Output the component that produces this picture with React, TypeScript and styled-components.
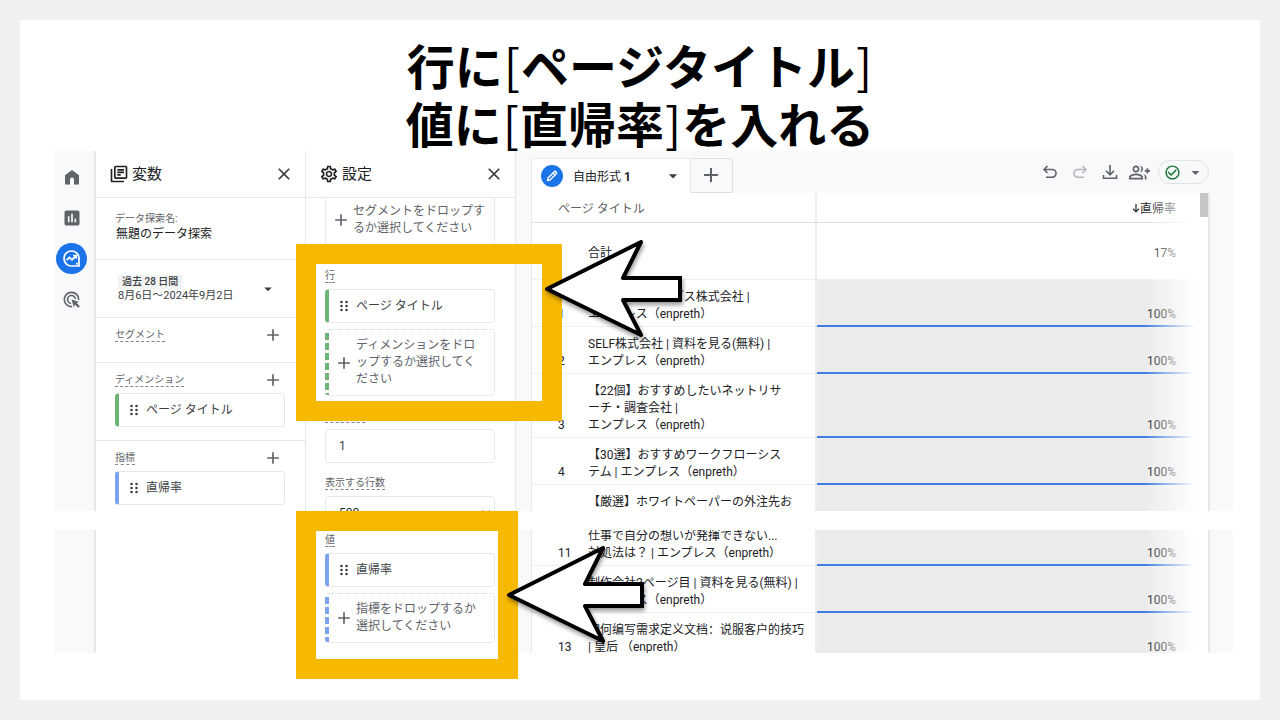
import React from "react";
import styled, { createGlobalStyle, css } from "styled-components";
import {
  MdAdd,
  MdAdsClick,
  MdArrowDropDown,
  MdCheckCircleOutline,
  MdClose,
  MdInsertChart,
  MdOutlineGroupAdd,
  MdOutlineLibraryBooks,
  MdOutlineSettings,
} from "react-icons/md";

const GREEN = "#6db577";
const BLUE = "#7ba4ee";
const LINE = "#e6e8eb";

const GlobalStyle = createGlobalStyle`
  *, *::before, *::after { box-sizing: border-box; }
  body {
    margin: 0;
    background: #f0f0f0;
    color: #202124;
    font-family: Roboto, "Noto Sans CJK JP", sans-serif;
    font-size: 12px;
    line-height: 17px;
  }
  button, input, select { font: inherit; color: inherit; }
`;

const Page = styled.div`
  min-height: 100vh;
  padding: 20px;
  display: flex;
`;

const Slide = styled.main`
  flex: 1;
  min-width: 0;
  background: #fff;
  padding: 15px 27px 20px 34px;
`;

const Title = styled.h1`
  margin: 0 7px 0 0;
  text-align: center;
  color: #000;
  font: 700 48px/58px "Noto Sans CJK JP", sans-serif;
`;

const Bracket = styled.span`
  margin: 0 1px;
  font-weight: 400;
`;

const Stage = styled.div`
  position: relative;
  display: flex;
  flex-direction: column;
  gap: 19px;
`;

const Capture = styled.section<{ $height: number }>`
  display: flex;
  height: ${(p) => p.$height}px;
  overflow: hidden;
  background: #f8f9fb;
`;

const Rail = styled.nav`
  flex: none;
  width: 42px;
  padding-top: 5px;
  border-right: 2px solid ${LINE};
  padding-right: 5px;
  display: flex;
  flex-direction: column;
  align-items: center;
`;

const RailButton = styled.button<{ $active?: boolean }>`
  width: 31px;
  height: 31px;
  margin: 5px 0;
  padding: 0;
  border: 0;
  border-radius: 50%;
  display: grid;
  place-items: center;
  background: ${(p) => (p.$active ? "#1a73e8" : "transparent")};
  color: ${(p) => (p.$active ? "#fff" : "#5f6368")};
`;

const Panel = styled.section`
  flex: none;
  width: 210px;
  background: #fff;
  border-right: 1px solid ${LINE};
  display: flex;
  flex-direction: column;
  overflow: hidden;
`;

const PanelHeader = styled.header`
  flex: none;
  height: 47px;
  padding: 0 11px 1px 13px;
  border-bottom: 1px solid ${LINE};
  display: flex;
  align-items: center;
  gap: 3px;
  background: #fff;
  position: relative;
`;

const PanelTitle = styled.h2`
  margin: 0;
  flex: 1;
  font-size: 15px;
  font-weight: 400;
  line-height: 20px;
`;

const IconButton = styled.button`
  flex: none;
  padding: 0;
  border: 0;
  background: none;
  display: grid;
  place-items: center;
  color: #3c4043;
`;

const Block = styled.div<{ $height?: number }>`
  flex: none;
  ${(p) => p.$height && css`height: ${p.$height}px;`}
  padding: 9px 19px 0;
  border-bottom: 1px solid ${LINE};
  &:last-child { border-bottom: 0; }
`;

const Small = styled.div`
  margin-top: 4px;
  font-size: 10px;
  line-height: 15px;
  color: #5f6368;
`;

const Name = styled.div`
  padding-left: 1px;
  line-height: 16px;
`;

const DateBlock = styled(Block)`
  display: flex;
  align-items: center;
  justify-content: space-between;
  padding: 0 28px 0 22px;
`;

const DateText = styled.div`
  font-size: 11px;
  line-height: 14px;
  color: #3c4043;
`;

const Period = styled.span`
  display: block;
  width: max-content;
  padding: 0 4px;
  background: #f1f3f4;
  font-size: 10px;
  font-weight: 500;
`;

const LabelRow = styled.div`
  display: flex;
  justify-content: space-between;
  align-items: center;
  height: 15px;
  margin-bottom: 6px;
  & > button { margin-right: 3px; }
`;

const Label = styled.label`
  display: block;
  width: max-content;
  height: 15px;
  font-size: 10px;
  line-height: 16px;
  color: #5f6368;
  border-bottom: 1px dashed #80868b;
`;

const Chip = styled.button<{ $tone: string }>`
  display: flex;
  align-items: center;
  gap: 8px;
  width: 170px;
  height: 34px;
  padding: 0 11px;
  border: 1px solid ${LINE};
  border-left: 4px solid ${(p) => p.$tone};
  border-radius: 4px;
  background: #fff;
  color: #3c4043;
`;

const Drop = styled.button<{ $tone?: string }>`
  display: flex;
  align-items: center;
  gap: 2px;
  width: 170px;
  padding: 7px 0 7px ${(p) => (p.$tone ? 9 : 5)}px;
  border: 1px dotted #d4d7db;
  border-radius: 4px;
  text-align: left;
  white-space: nowrap;
  color: #5f6368;
  background: #fff;
  ${(p) =>
    p.$tone &&
    css`
      border-left: 0;
      background: repeating-linear-gradient(
          to bottom,
          transparent 0 3px,
          ${p.$tone} 3px 10px
        )
        left top / 4px 100% no-repeat;
    `}
  & > svg { flex: none; }
`;

const Settings = styled.div<{ $top: number }>`
  padding: 0 20px 0 19px;
  margin-top: ${(p) => p.$top}px;
  display: flex;
  flex-direction: column;
  gap: 6px;
`;

const Group = styled.div<{ $gap?: number }>`
  display: flex;
  flex-direction: column;
  gap: 6px;
  margin-top: ${(p) => p.$gap ?? 0}px;
`;

const field = css`
  width: 170px;
  height: 34px;
  padding: 0 13px;
  border: 1px solid ${LINE};
  border-radius: 4px;
  background: #fff;
  color: #3c4043;
`;

const TextInput = styled.input`
  ${field}
`;

const Select = styled.select`
  ${field}
  padding: 0 9px;
  color: #202124;
`;

const Main = styled.section`
  flex: 1;
  min-width: 0;
  margin-left: 15px;
`;

const TopBar = styled.div`
  display: flex;
  align-items: flex-end;
  height: 42px;
  padding-right: 24px;
`;

const Tab = styled.button`
  display: flex;
  align-items: center;
  width: 160px;
  height: 35px;
  padding: 0 7px 0 9px;
  border: 1px solid ${LINE};
  border-bottom: 0;
  border-radius: 4px 4px 0 0;
  background: #fff;
  & > span:nth-child(2) { flex: 1; text-align: left; padding: 2px 0 0 10px; }
`;

const Pencil = styled.span`
  display: grid;
  place-items: center;
  width: 22px;
  height: 22px;
  border-radius: 50%;
  background: #1a73e8;
`;

const AddTab = styled.button`
  width: 42px;
  height: 35px;
  padding: 0 1px 2px 0;
  border: 1px solid #dcdfe3;
  border-left: 0;
  border-radius: 0 4px 0 0;
  background: #f8f9fb;
  color: #5f6368;
  display: grid;
  place-items: center;
`;

const Tools = styled.div`
  flex: 1;
  height: 42px;
  display: flex;
  justify-content: flex-end;
  align-items: center;
  gap: 9px;
  & > button { width: 21px; color: #5f6368; }
`;

const Status = styled.button`
  && {
    width: 51px;
    height: 24px;
    padding: 0 3px 0 5px;
    margin-left: -1px;
    border: 1px solid #dfe2e6;
    border-radius: 12px;
    background: #f8f9fb;
    display: flex;
    align-items: center;
    justify-content: space-between;
  }
`;

const Card = styled.div`
  position: relative;
  margin-right: 23px;
  background: #fff;
  border: solid ${LINE};
  border-width: 0 2px 0 1px;
  min-height: 100%;
`;

const Fade = styled.div`
  position: absolute;
  top: 0;
  right: 0;
  bottom: 0;
  width: 64px;
  background: linear-gradient(to right, rgba(255, 255, 255, 0), #fff 80%);
`;

const ScrollThumb = styled.div`
  position: absolute;
  top: 0;
  right: 0;
  width: 8px;
  height: 24px;
  background: #c6c6c6;
`;

const Table = styled.table<{ $shift?: number }>`
  width: 100%;
  table-layout: fixed;
  border-collapse: separate;
  border-spacing: 0;
  margin-top: ${(p) => -(p.$shift ?? 0)}px;
  td, th { border-bottom: 1px solid #eef0f2; font-weight: 400; text-align: left; }
`;

const NumberCell = styled.td`
  padding: 9px 0 3px 26px;
  vertical-align: bottom;
`;

const NameCell = styled.td`
  padding: 9px 0 3px;
  vertical-align: top;
  white-space: nowrap;
  && { border-right: 2px solid #eceef0; }
`;

const BarCell = styled.td`
  padding: 9px 32px 2px 0;
  vertical-align: bottom;
  background: #ebebeb;
  && { text-align: right; border-bottom: 2px solid #3f7de0; }
`;

const HeadName = styled.th`
  height: 30px;
  padding: 4px 0 0 26px;
  color: #5f6368;
  && { border-right: 2px solid #eceef0; border-bottom-color: #dfe1e5; }
`;

const HeadValue = styled.th`
  padding: 4px 32px 0 0;
  && { text-align: right; border-bottom-color: #dfe1e5; }
`;

const TotalCell = styled.td<{ $value?: boolean }>`
  height: 57px;
  padding: 4px ${(p) => (p.$value ? 32 : 0)}px 0 0;
  && { ${(p) => (p.$value ? "text-align: right;" : "border-right: 2px solid #eceef0;")} }
`;

const Chinese = styled.span`
  font-family: Roboto, "Noto Sans CJK SC", sans-serif;
`;

const Frame = styled.div<{ $x: number; $y: number; $w: number; $h: number }>`
  position: absolute;
  left: ${(p) => p.$x}px;
  top: ${(p) => p.$y}px;
  width: ${(p) => p.$w}px;
  height: ${(p) => p.$h}px;
  border: 20px solid #f6b900;
  pointer-events: none;
`;

const ArrowSvg = styled.svg<{ $x: number; $y: number }>`
  position: absolute;
  left: ${(p) => p.$x}px;
  top: ${(p) => p.$y}px;
  filter: drop-shadow(1px 3px 2px rgba(0, 0, 0, 0.4));
  pointer-events: none;
`;

const Arrow = ({ x, y }: { x: number; y: number }) => (
  <ArrowSvg $x={x} $y={y} width="144" height="104" viewBox="0 0 144 104" aria-hidden="true">
    <path
      d="M4 52 98 5 80 41H137V63H80L98 98Z"
      fill="#fff"
      stroke="#000"
      strokeWidth="4"
      strokeLinejoin="round"
    />
    <path d="M82 41H137V63H82" fill="none" stroke="#000" strokeWidth="4" />
  </ArrowSvg>
);

const HomeIcon = () => (
  <svg width="16" height="16" viewBox="0 0 16 16" aria-hidden="true">
    <path d="M1 6.2 8 1l7 5.2V15.500H10V10.500a2 2 0 0 0-4 0V15.500H1Z" fill="currentColor" />
  </svg>
);

const ExploreIcon = () => (
  <svg width="19" height="19" viewBox="0 0 19 19" fill="none" stroke="currentColor" aria-hidden="true">
    <path d="M17 9.500V17H9.500A7.500 7.500 0 1 1 17 9.500Z" strokeWidth="1.700" />
    <path d="M4.500 11.200 7.500 8.500 10 10.800 13.800 7" strokeWidth="1.800" />
    <path d="M11 6.500h3.200v3.200" strokeWidth="1.500" />
    <circle cx="14.800" cy="14.800" r="1" fill="#fff" stroke="none" />
  </svg>
);

const DragIcon = () => (
  <svg width="8" height="12" viewBox="0 0 8 12" fill="#3c4043" aria-hidden="true">
    {[2, 6, 10].map((y) => (
      <React.Fragment key={y}>
        <circle cx="1.500" cy={y} r="1.300" />
        <circle cx="6.500" cy={y} r="1.300" />
      </React.Fragment>
    ))}
  </svg>
);

const PencilIcon = () => (
  <svg width="12" height="12" viewBox="0 0 12 12" fill="none" stroke="#fff" aria-hidden="true">
    <path d="M1.500 10.500 2 8 8.300 1.700a1 1 0 0 1 1.400 0l.6.6a1 1 0 0 1 0 1.400L4 10Z" strokeWidth="1.400" strokeLinejoin="round" />
    <path d="M7 3 9 5" strokeWidth="1.300" />
  </svg>
);

const UndoIcon = ({ flip }: { flip?: boolean }) => (
  <svg width="16" height="16" viewBox="0 0 16 16" fill="none" stroke={flip ? "#b4b7ba" : "#5f6368"} strokeWidth="1.600" aria-hidden="true">
    <g transform={flip ? "matrix(-1 0 0 1 16 0)" : undefined}>
      <path d="M5.500 2 2 5.500 5.500 9M2 5.500H10.200a3.800 3.800 0 0 1 0 7.700H4" />
    </g>
  </svg>
);

const DownloadIcon = () => (
  <svg width="16" height="16" viewBox="0 0 16 16" fill="none" stroke="currentColor" strokeWidth="1.600" aria-hidden="true">
    <path d="M8 1v9.500M4 6.800l4 4 4-4M1.500 11v3.200h13V11" />
  </svg>
);

const SortIcon = () => (
  <svg width="8" height="9" viewBox="0 0 8 9" fill="none" stroke="#3c4043" strokeWidth="1.400" aria-hidden="true">
    <path d="M4 0v8M1 4.800l3 3 3-3" />
  </svg>
);

type Row = { no: number; name: React.ReactNode };

const upperRows: Row[] = [
  { no: 1, name: <>サイバーウェイブス株式会社 |<br />エンプレス（enpreth）</> },
  { no: 2, name: <>SELF株式会社 | 資料を見る(無料) |<br />エンプレス（enpreth）</> },
  { no: 3, name: <>【22個】おすすめしたいネットリサ<br />ーチ・調査会社 |<br />エンプレス（enpreth）</> },
  { no: 4, name: <>【30選】おすすめワークフローシス<br />テム | エンプレス（enpreth）</> },
];

const lowerRows: Row[] = [
  { no: 11, name: <>仕事で自分の想いが発揮できない...<br />対処法は？ | エンプレス（enpreth）</> },
  { no: 12, name: <>制作会社2ページ目 | 資料を見る(無料) |<br />エンプレス（enpreth）</> },
  { no: 13, name: <Chinese>如何编写需求定义文档：说服客户的技巧<br />| 皇后 （enpreth）</Chinese> },
];

const Columns = () => (
  <colgroup>
    <col style={{ width: 56 }} />
    <col style={{ width: 229 }} />
    <col />
  </colgroup>
);

const Rows = ({ rows }: { rows: Row[] }) => (
  <>
    {rows.map((r) => (
      <tr key={r.no}>
        <NumberCell>{r.no}</NumberCell>
        <NameCell>{r.name}</NameCell>
        <BarCell>100%</BarCell>
      </tr>
    ))}
  </>
);

const AddButton = ({ label }: { label: string }) => (
  <IconButton aria-label={label}>
    <MdAdd size={20} color="#5f6368" />
  </IconButton>
);

export default function App() {
  return (
    <>
      <GlobalStyle />
      <Page>
        <Slide>
          <Title>
            行に<Bracket>[</Bracket>ページタイトル<Bracket>]</Bracket>
            <br />
            値に<Bracket>[</Bracket>直帰率<Bracket>]</Bracket>を入れる
          </Title>
          <Stage>
            <Capture $height={360}>
              <Rail>
                <RailButton aria-label="ホーム"><HomeIcon /></RailButton>
                <RailButton aria-label="レポート"><MdInsertChart size={20} /></RailButton>
                <RailButton aria-label="探索" $active><ExploreIcon /></RailButton>
                <RailButton aria-label="広告"><MdAdsClick size={19} /></RailButton>
              </Rail>
              <Panel>
                <PanelHeader>
                  <MdOutlineLibraryBooks size={20} />
                  <PanelTitle>変数</PanelTitle>
                  <IconButton aria-label="閉じる"><MdClose size={20} /></IconButton>
                </PanelHeader>
                <Block $height={62}>
                  <Small>データ探索名:</Small>
                  <Name>無題のデータ探索</Name>
                </Block>
                <DateBlock $height={58}>
                  <DateText>
                    <Period>過去 28 日間</Period>
                    8月6日～2024年9月2日
                  </DateText>
                  <IconButton aria-label="期間を選択"><MdArrowDropDown size={18} /></IconButton>
                </DateBlock>
                <Block $height={45}>
                  <LabelRow><Label as="span">セグメント</Label><AddButton label="セグメントを追加" /></LabelRow>
                </Block>
                <Block $height={78}>
                  <LabelRow><Label as="span">ディメンション</Label><AddButton label="ディメンションを追加" /></LabelRow>
                  <Chip $tone={GREEN}><DragIcon />ページ タイトル</Chip>
                </Block>
                <Block>
                  <LabelRow><Label as="span">指標</Label><AddButton label="指標を追加" /></LabelRow>
                  <Chip $tone={BLUE}><DragIcon />直帰率</Chip>
                </Block>
              </Panel>
              <Panel>
                <PanelHeader>
                  <MdOutlineSettings size={20} />
                  <PanelTitle>設定</PanelTitle>
                  <IconButton aria-label="閉じる"><MdClose size={20} /></IconButton>
                </PanelHeader>
                <Settings $top={-3}>
                  <Drop>
                    <MdAdd size={20} />
                    <span>セグメントをドロップす<br />るか選択してください</span>
                  </Drop>
                  <Group $gap={17}>
                    <Label as="span">行</Label>
                    <Chip $tone={GREEN}><DragIcon />ページ タイトル</Chip>
                    <Drop $tone={GREEN}>
                      <MdAdd size={20} />
                      <span>ディメンションをドロ<br />ップするか選択してく<br />ださい</span>
                    </Drop>
                  </Group>
                  <Group $gap={6}>
                    <Label htmlFor="first-row">最初の行</Label>
                    <TextInput id="first-row" defaultValue="1" />
                  </Group>
                  <Group $gap={6}>
                    <Label htmlFor="row-count">表示する行数</Label>
                    <Select id="row-count" defaultValue="500"><option>500</option></Select>
                  </Group>
                </Settings>
              </Panel>
              <Main>
                <TopBar>
                  <Tab>
                    <Pencil><PencilIcon /></Pencil>
                    <span>自由形式 <b>1</b></span>
                    <MdArrowDropDown size={20} color="#3c4043" />
                  </Tab>
                  <AddTab aria-label="タブを追加"><MdAdd size={24} /></AddTab>
                  <Tools>
                    <IconButton aria-label="元に戻す"><UndoIcon /></IconButton>
                    <IconButton aria-label="やり直す"><UndoIcon flip /></IconButton>
                    <IconButton aria-label="ダウンロード"><DownloadIcon /></IconButton>
                    <IconButton aria-label="共有"><MdOutlineGroupAdd size={21} /></IconButton>
                    <Status aria-label="データの状態">
                      <MdCheckCircleOutline size={17} color="#137333" />
                      <MdArrowDropDown size={19} />
                    </Status>
                  </Tools>
                </TopBar>
                <Card>
                  <Table>
                    <Columns />
                    <thead>
                      <tr>
                        <HeadName colSpan={2}>ページ タイトル</HeadName>
                        <HeadValue><SortIcon />直帰率</HeadValue>
                      </tr>
                    </thead>
                    <tbody>
                      <tr>
                        <td />
                        <TotalCell>合計</TotalCell>
                        <TotalCell $value>17%</TotalCell>
                      </tr>
                      <Rows rows={upperRows} />
                      <tr>
                        <NumberCell />
                        <NameCell>【厳選】ホワイトペーパーの外注先お</NameCell>
                        <BarCell />
                      </tr>
                    </tbody>
                  </Table>
                  <Fade />
                  <ScrollThumb />
                </Card>
              </Main>
            </Capture>
            <Capture $height={123}>
              <Rail />
              <Panel />
              <Panel>
                <Settings $top={2}>
                  <Label as="span">値</Label>
                  <Chip $tone={BLUE}><DragIcon />直帰率</Chip>
                  <Drop $tone={BLUE}>
                    <MdAdd size={20} />
                    <span>指標をドロップするか<br />選択してください</span>
                  </Drop>
                </Settings>
              </Panel>
              <Main>
                <Card>
                  <Table $shift={11}>
                    <Columns />
                    <tbody>
                      <Rows rows={lowerRows} />
                    </tbody>
                  </Table>
                  <Fade />
                </Card>
              </Main>
            </Capture>
            <Frame $x={242} $y={93} $w={266} $h={177} />
            <Frame $x={242} $y={360} $w={222} $h={168} />
            <Arrow x={489} y={86} />
            <Arrow x={451} y={392} />
          </Stage>
        </Slide>
      </Page>
    </>
  );
}
